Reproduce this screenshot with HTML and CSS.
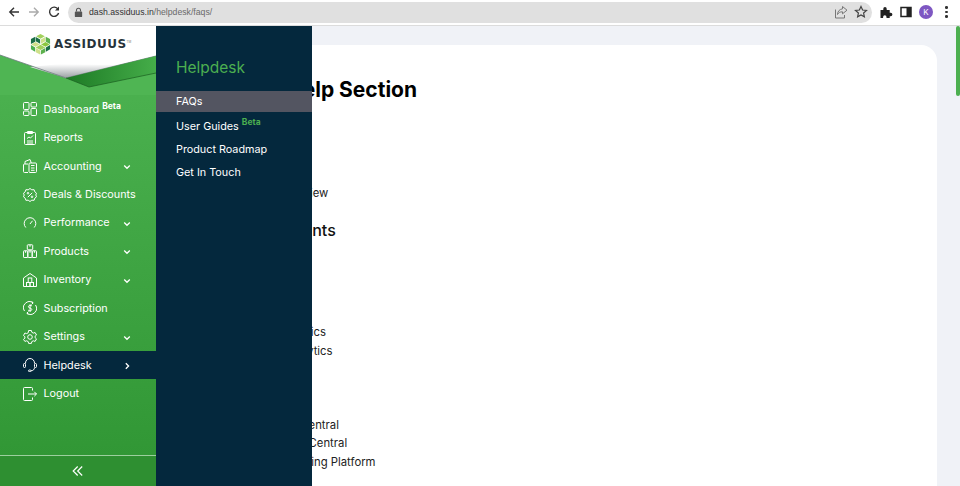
FILE: index.html
```html
<!DOCTYPE html>
<html lang="en">
<head>
    <meta charset="UTF-8">
    <title>Assiduus Helpdesk</title>
    <link rel="stylesheet" href="styles.css">
</head>
<body>
    <!-- browser toolbar -->
    <div class="toolbar">
        <div class="nav-icons">
            <svg viewBox="0 0 14 14" class="tb-icon"><path d="M12 7H3M7 2.800 2.800 7 7 11.200" fill="none" stroke="#333" stroke-width="1.400"/></svg>
            <svg viewBox="0 0 14 14" class="tb-icon"><path d="M2 7h9M7 2.800 11.200 7 7 11.200" fill="none" stroke="#aaa" stroke-width="1.400"/></svg>
            <svg viewBox="0 0 14 14" class="tb-icon"><path d="M11 4.200A4.600 4.600 0 1 0 11.600 8" fill="none" stroke="#333" stroke-width="1.400"/><path d="M12 1.500v4H8z" fill="#333"/></svg>
        </div>
        <div class="omnibox">
            <svg viewBox="0 0 12 12" class="lock"><rect x="2" y="5" width="8" height="6" rx="1" fill="#555"/><path d="M3.800 5V3.600a2.200 2.200 0 0 1 4.400 0V5" fill="none" stroke="#555" stroke-width="1.200"/></svg>
            <span class="url"><span class="url-host">dash.assiduus.in</span>/helpdesk/faqs/</span>
            <span class="omni-right">
                <svg viewBox="0 0 14 14" class="tb-icon"><path d="M8.500 1.500 13 5.200 8.500 8.800V6.800C6 6.800 4.500 7.600 3.500 9.500 3.500 6.500 5.500 4.200 8.500 3.800zM1.500 4.500v8.500h9V10" fill="none" stroke="#777" stroke-width="1"/></svg>
                <svg viewBox="0 0 14 14" class="tb-icon"><path d="M7 1.500 8.600 5l3.900.4-2.900 2.600.8 3.800L7 9.900l-3.400 1.900.8-3.800L1.500 5.400 5.400 5z" fill="none" stroke="#444" stroke-width="1.200"/></svg>
            </span>
        </div>
        <div class="ext-icons">
            <svg viewBox="0 0 14 14" class="tb-icon"><path d="M1.500 5h2.800V3.800a1.700 1.700 0 0 1 3.400 0V5h3v2.800h1a1.700 1.700 0 0 1 0 3.400h-1V13H7.500v-1a1.700 1.700 0 0 0-3.400 0v1H1.500z" fill="#222"/></svg>
            <svg viewBox="0 0 14 14" class="tb-icon"><rect x="2" y="2.500" width="10" height="9" fill="none" stroke="#222" stroke-width="1.500"/><rect x="7.500" y="2.500" width="4.500" height="9" fill="#222"/></svg>
            <span class="avatar">K</span>
            <span class="dots"><i></i><i></i><i></i></span>
        </div>
    </div>

    <div class="app">
        <!-- left green nav -->
        <aside class="sidebar">
            <div class="side-head">
                <svg class="swoosh" viewBox="0 0 156 69">
                    <defs>
                        <linearGradient id="grey" x1="0" y1="0" x2="0" y2="1"><stop offset="0" stop-color="#fff"/><stop offset="1" stop-color="#9aa0a3"/></linearGradient>
                        <linearGradient id="dark" x1="0" y1="0" x2="1" y2="0"><stop offset="0" stop-color="#1d7a25"/><stop offset="1" stop-color="#45ad49"/></linearGradient>
                    </defs>
                    <rect width="156" height="69" fill="#4fb553"/>
                    <path d="M0 0H156V30L66 52 0 29z" fill="#fff"/>
                    <path d="M30 41 66 52 120 39 60 38z" fill="url(#grey)"/>
                    <path d="M0 29 66 52 156 30" fill="none" stroke="#6f7b7f" stroke-width=".8"/>
                    <path d="M66 52 156 30V47L89 61z" fill="url(#dark)"/>
                    <path d="M66 52 89 61 156 47" fill="none" stroke="#1a5f20" stroke-width=".7"/>
                </svg>
                <div class="brand">
                    <svg viewBox="0 0 22 22" class="brand-mark">
                        <path d="M11 .5 15.500 3 11 5.500 6.500 3z" fill="#a2d05c"/>
                        <path d="M6 3.600 10.600 6.200V10.800L6 8.200z" fill="#1b6e46"/>
                        <path d="M16 3.600 11.400 6.200V10.800L16 8.200z" fill="#cfe08a"/>
                        <path d="M1 5.800 5.500 3.400V8.600L1 11z" fill="#1b6e46"/>
                        <path d="M21 5.800 16.500 3.400V8.600L21 11z" fill="#5cb14d"/>
                        <path d="M1.300 11.400 5.800 8.800 10.400 11.400 5.800 14z" fill="#cfe08a"/>
                        <path d="M11.600 11.400 16.200 8.800 20.700 11.400 16.200 14z" fill="#8cc63f"/>
                        <path d="M1 12 5.400 14.600V19L1 16.400z" fill="#4caf50"/>
                        <path d="M21 12 16.600 14.600V19L21 16.400z" fill="#1b6e46"/>
                        <path d="M6 14.600 11 11.800 16 14.600 11 17.400z" fill="#a2d05c"/>
                        <path d="M6 15.200 10.600 17.800V22L6 19.600z" fill="#cfe08a"/>
                        <path d="M16 15.200 11.400 17.800V22L16 19.600z" fill="#5cb14d"/>
                    </svg>
                    <span class="brand-name">ASSIDUUS</span><span class="tm">TM</span>
                </div>
            </div>
            <nav class="menu">
                <a class="menu-item"><svg viewBox="0 0 14 14" class="m-icon"><rect x=".5" y=".5" width="5.500" height="7" rx="1"/><rect x=".5" y="9" width="5.500" height="4.500" rx="1"/><rect x="8" y=".5" width="5.500" height="4.500" rx="1"/><rect x="8" y="6.500" width="5.500" height="7" rx="1"/></svg><span>Dashboard</span><sup class="beta">Beta</sup></a>
                <a class="menu-item"><svg viewBox="0 0 14 14" class="m-icon"><rect x="1.500" y="1.500" width="11" height="12" rx="1"/><path d="M4.500.5h5v2h-5zM4 10h6M4 12h6M4 7.500 6 6l1.500 1L10 4.500"/></svg><span>Reports</span></a>
                <a class="menu-item"><svg viewBox="0 0 14 14" class="m-icon"><path d="M5 13.500H1.500a1 1 0 0 1-1-1V6a1 1 0 0 1 1-1h3.500M2 5V2.500L7 .5 8.300 4"/><rect x="6" y="4" width="7.500" height="9.500" rx="1"/><path d="M8 6.500h3.500M8 9h3.500M8 11.300h3.500"/></svg><span>Accounting</span><svg viewBox="0 0 8 8" class="caret"><path d="M1.200 2.500 4 5.300 6.800 2.500"/></svg></a>
                <a class="menu-item"><svg viewBox="0 0 14 14" class="m-icon"><path d="M7 .5l1.800 1.300 2.300-.1.700 2.100 1.700 1.400L12.800 7l.7 1.800-1.700 1.400-.7 2.100-2.300-.1L7 13.500l-1.800-1.300-2.300.1-.7-2.100L.5 8.800 1.200 7 .5 5.200l1.700-1.400.7-2.100 2.300.1z"/><path d="M4.800 9.200 9.200 4.800"/><circle cx="5" cy="5.200" r=".8"/><circle cx="9" cy="8.800" r=".8"/></svg><span>Deals &amp; Discounts</span></a>
                <a class="menu-item"><svg viewBox="0 0 14 14" class="m-icon"><path d="M2.800 11.500A5.800 5.800 0 1 1 11.200 11.500M7 8 9.500 4.800"/></svg><span>Performance</span><svg viewBox="0 0 8 8" class="caret"><path d="M1.200 2.500 4 5.300 6.800 2.500"/></svg></a>
                <a class="menu-item"><svg viewBox="0 0 14 14" class="m-icon"><rect x="4.300" y=".8" width="5.400" height="5" rx=".6"/><rect x=".5" y="6.800" width="4.300" height="6.700" rx=".6"/><rect x="4.800" y="6.800" width="4.400" height="6.700" rx=".6"/><rect x="9.200" y="6.800" width="4.300" height="6.700" rx=".6"/><path d="M7 .8v2M2.600 6.800v2M7 6.800v2M11.400 6.800v2"/></svg><span>Products</span><svg viewBox="0 0 8 8" class="caret"><path d="M1.200 2.500 4 5.300 6.800 2.500"/></svg></a>
                <a class="menu-item"><svg viewBox="0 0 14 14" class="m-icon"><path d="M.5 13.500V5L7 .5 13.500 5v8.500z"/><rect x="3.500" y="9.500" width="3.500" height="4"/><rect x="7" y="9.500" width="3.500" height="4"/><rect x="5.200" y="5" width="3.600" height="4.500"/></svg><span>Inventory</span><svg viewBox="0 0 8 8" class="caret"><path d="M1.200 2.500 4 5.300 6.800 2.500"/></svg></a>
                <a class="menu-item"><svg viewBox="0 0 14 14" class="m-icon"><path d="M1.500 10A6 6 0 0 1 10 1.800M12.500 4A6 6 0 0 1 4 12.200M8.500.3 10.200 1.800 8.500 3.500M5.500 13.700 3.800 12.200 5.500 10.500"/><path d="M9 5C8 4.200 5.400 4.200 5.400 5.700c0 1.800 3.400 1 3.400 2.800 0 1.500-2.700 1.500-3.700.6M7.100 3.200v7.800"/></svg><span>Subscription</span></a>
                <a class="menu-item"><svg viewBox="0 0 14 14" class="m-icon"><path d="M5.600.5h2.800l.4 1.800 1.500.8 1.800-.6 1.400 2.500-1.400 1.200v1.500l1.400 1.200-1.400 2.500-1.800-.6-1.500.8-.4 1.800H5.600l-.4-1.800-1.500-.8-1.800.6L.5 9.400l1.400-1.200V6.700L.5 5.500l1.400-2.500 1.800.6 1.500-.8z"/><circle cx="7" cy="7" r="2.300"/></svg><span>Settings</span><svg viewBox="0 0 8 8" class="caret"><path d="M1.200 2.500 4 5.300 6.800 2.500"/></svg></a>
                <a class="menu-item active"><svg viewBox="0 0 14 14" class="m-icon"><path d="M2.500 5.500V5a4.500 4.500 0 0 1 9 0v.5M11.500 9.500c0 2-1.500 3.300-3.500 3.300"/><rect x=".5" y="5.500" width="2" height="4" rx="1"/><rect x="11.500" y="5.500" width="2" height="4" rx="1"/><rect x="5.500" y="12" width="2.500" height="1.600" rx=".8"/></svg><span>Helpdesk</span><svg viewBox="0 0 8 8" class="caret"><path d="M2.800 1.200 5.600 4 2.800 6.800"/></svg></a>
                <a class="menu-item"><svg viewBox="0 0 14 14" class="m-icon"><path d="M9.500 3.500V1.500a1 1 0 0 0-1-1H1.500a1 1 0 0 0-1 1v11a1 1 0 0 0 1 1h7a1 1 0 0 0 1-1v-2M5 7h8.500M11.300 4.800 13.500 7l-2.200 2.200"/></svg><span>Logout</span></a>
            </nav>
            <div class="collapse">
                <svg viewBox="0 0 12 12" class="collapse-icon"><path d="M5.700 1.500 1.200 6l4.500 4.500M10.200 1.500 5.700 6l4.500 4.500"/></svg>
            </div>
        </aside>

        <!-- second level menu -->
        <div class="submenu">
            <h2 class="sub-title">Helpdesk</h2>
            <a class="sub-item current">FAQs</a>
            <a class="sub-item">User Guides<sup class="beta green">Beta</sup></a>
            <a class="sub-item">Product Roadmap</a>
            <a class="sub-item">Get In Touch</a>
        </div>

        <!-- page behind the menu -->
        <main class="content">
            <div class="card">
                <h1>Help Section</h1>
                <p class="row overview">Tools Overview</p>
                <h3>Settlements</h3>
                <p class="row sales">Sales Analytics</p>
                <p class="row traffic">Traffic Analytics</p>
                <p class="row second-group">Seller Central</p>
                <p class="row">Vendor Central</p>
                <p class="row">Advertising Platform</p>
            </div>
            <div class="scroll-thumb"></div>
        </main>
    </div>
</body>
</html>
```

FILE: styles.css
```css
* {
    box-sizing: border-box;
}

html, body {
    margin: 0;
    height: 100%;
    overflow: hidden;
}

body {
    font-family: "Inter", "Liberation Sans", sans-serif;
    background: #f0f2f7;
    display: flex;
    flex-direction: column;
}

/* Browser toolbar */
.toolbar {
    height: 26px;
    flex: none;
    background: #fff;
    border-bottom: 1px solid #dcdcdc;
    display: flex;
    align-items: center;
    padding: 0 0 1px 7px;
}

.nav-icons {
    display: flex;
    gap: 6px;
    width: 61px;
    flex: none;
}

.tb-icon {
    width: 14px;
    height: 14px;
    flex: none;
}

.omnibox {
    width: 804px;
    height: 21px;
    flex: none;
    background: #e0e0e0;
    border-radius: 11px;
    display: flex;
    align-items: center;
    padding: 0 4px 0 5px;
}

.lock {
    width: 11px;
    height: 11px;
    margin-right: 5px;
}

.url {
    font-family: "Liberation Sans", sans-serif;
    font-size: 8.700px;
    color: #6a6a6a;
}

.url-host {
    color: #333;
}

.omni-right {
    margin-left: auto;
    display: flex;
    gap: 6px;
}

.ext-icons {
    display: flex;
    align-items: center;
    gap: 6px;
    padding-left: 7px;
}

.avatar {
    width: 14px;
    height: 14px;
    border-radius: 50%;
    background: #7e57c2;
    color: #fff;
    font-size: 8px;
    display: flex;
    align-items: center;
    justify-content: center;
}

.dots {
    display: flex;
    flex-direction: column;
    gap: 2px;
    margin-left: 6px;
}

.dots i {
    width: 2.500px;
    height: 2.500px;
    border-radius: 50%;
    background: #333;
}

/* App */
.app {
    flex: 1;
    display: flex;
    min-height: 0;
}

.sidebar {
    width: 156px;
    flex: none;
    background: linear-gradient(to bottom, #4fb553, #2f9533);
    display: flex;
    flex-direction: column;
    z-index: 2;
}

.side-head {
    height: 69px;
    flex: none;
    position: relative;
}

.swoosh {
    position: absolute;
    top: 0;
    left: 0;
    width: 156px;
    height: 69px;
}

.brand {
    position: relative;
    display: flex;
    align-items: center;
    padding: 7px 0 0 30px;
}

.brand-mark {
    width: 21px;
    height: 22px;
    flex: none;
    margin-right: 3px;
}

.brand-name {
    font-family: "DejaVu Sans", sans-serif;
    font-weight: 700;
    font-size: 12px;
    letter-spacing: .5px;
    color: #27333a;
}

.tm {
    font-size: 3px;
    color: #777;
    align-self: flex-start;
    margin-top: 7px;
}

.menu {
    display: flex;
    flex-direction: column;
    flex: 1;
}

.menu-item {
    height: 28.450px;
    display: flex;
    align-items: center;
    color: #fff;
    font-size: 10.800px;
    padding-left: 22.500px;
    position: relative;
}

.menu-item.active {
    background: #04283d;
}

.m-icon {
    width: 14px;
    height: 14px;
    flex: none;
    margin-right: 7px;
    fill: none;
    stroke: #fff;
    stroke-width: 1;
}

.caret {
    position: absolute;
    right: 25px;
    top: 11px;
    width: 8px;
    height: 8px;
    fill: none;
    stroke: #fff;
    stroke-width: 1.300;
}

.beta {
    font-size: 8.500px;
    font-weight: 700;
    margin-left: 3px;
    color: #fff;
    align-self: flex-start;
    line-height: 1;
    margin-top: 7px;
}

.beta.green {
    color: #4caf50;
    margin-top: 3px;
}

.collapse {
    height: 31px;
    flex: none;
    border-top: 1px solid #9ccf9e;
    background: #2e8f31;
    display: flex;
    align-items: center;
    justify-content: center;
}

.collapse-icon {
    width: 12px;
    height: 12px;
    fill: none;
    stroke: #fff;
    stroke-width: 1.200;
}

/* Second level */
.submenu {
    width: 156px;
    flex: none;
    background: #04283d;
    display: flex;
    flex-direction: column;
    z-index: 2;
}

.sub-title {
    margin: 0;
    height: 65px;
    padding: 32px 0 0 20px;
    font-size: 15.500px;
    line-height: 20px;
    font-weight: 400;
    color: #4caf50;
}

.sub-item {
    color: #fff;
    font-size: 10.800px;
    padding: 0 0 1px 20px;
    height: 23px;
    display: flex;
    align-items: center;
}

.sub-item.current {
    background: #535561;
    height: 21px;
    margin-bottom: 3px;
}

/* Page behind the menu */
.content {
    flex: 1;
    min-width: 0;
    margin-left: -156px;
    padding: 19px 23px 0 0;
    position: relative;
    display: flex;
}

.card {
    flex: 1;
    background: #fff;
    border-radius: 16px 16px 0 0;
    padding: 32px 0 0 111px;
    color: #111;
}

.scroll-thumb {
    position: absolute;
    top: 0;
    right: 0;
    width: 4px;
    height: 70px;
    background: #4caf50;
    border-radius: 2px;
}

h1 {
    margin: 0 0 0 20px;
    font-size: 21px;
    line-height: 26px;
    font-weight: 700;
    color: #000;
}

h3 {
    margin: 17px 0 0 -22px;
    font-size: 16px;
    line-height: 22px;
    font-weight: 500;
    color: #111;
}

.row {
    margin: 0;
    font-size: 11.300px;
    line-height: 18.400px;
    color: #222;
}

.overview {
    margin: 81px 0 0 -21px;
}

.sales {
    margin: 82px 0 0 -22px;
}

.traffic {
    margin-left: -21px;
}

.second-group {
    margin-top: 55.500px;
}
```
